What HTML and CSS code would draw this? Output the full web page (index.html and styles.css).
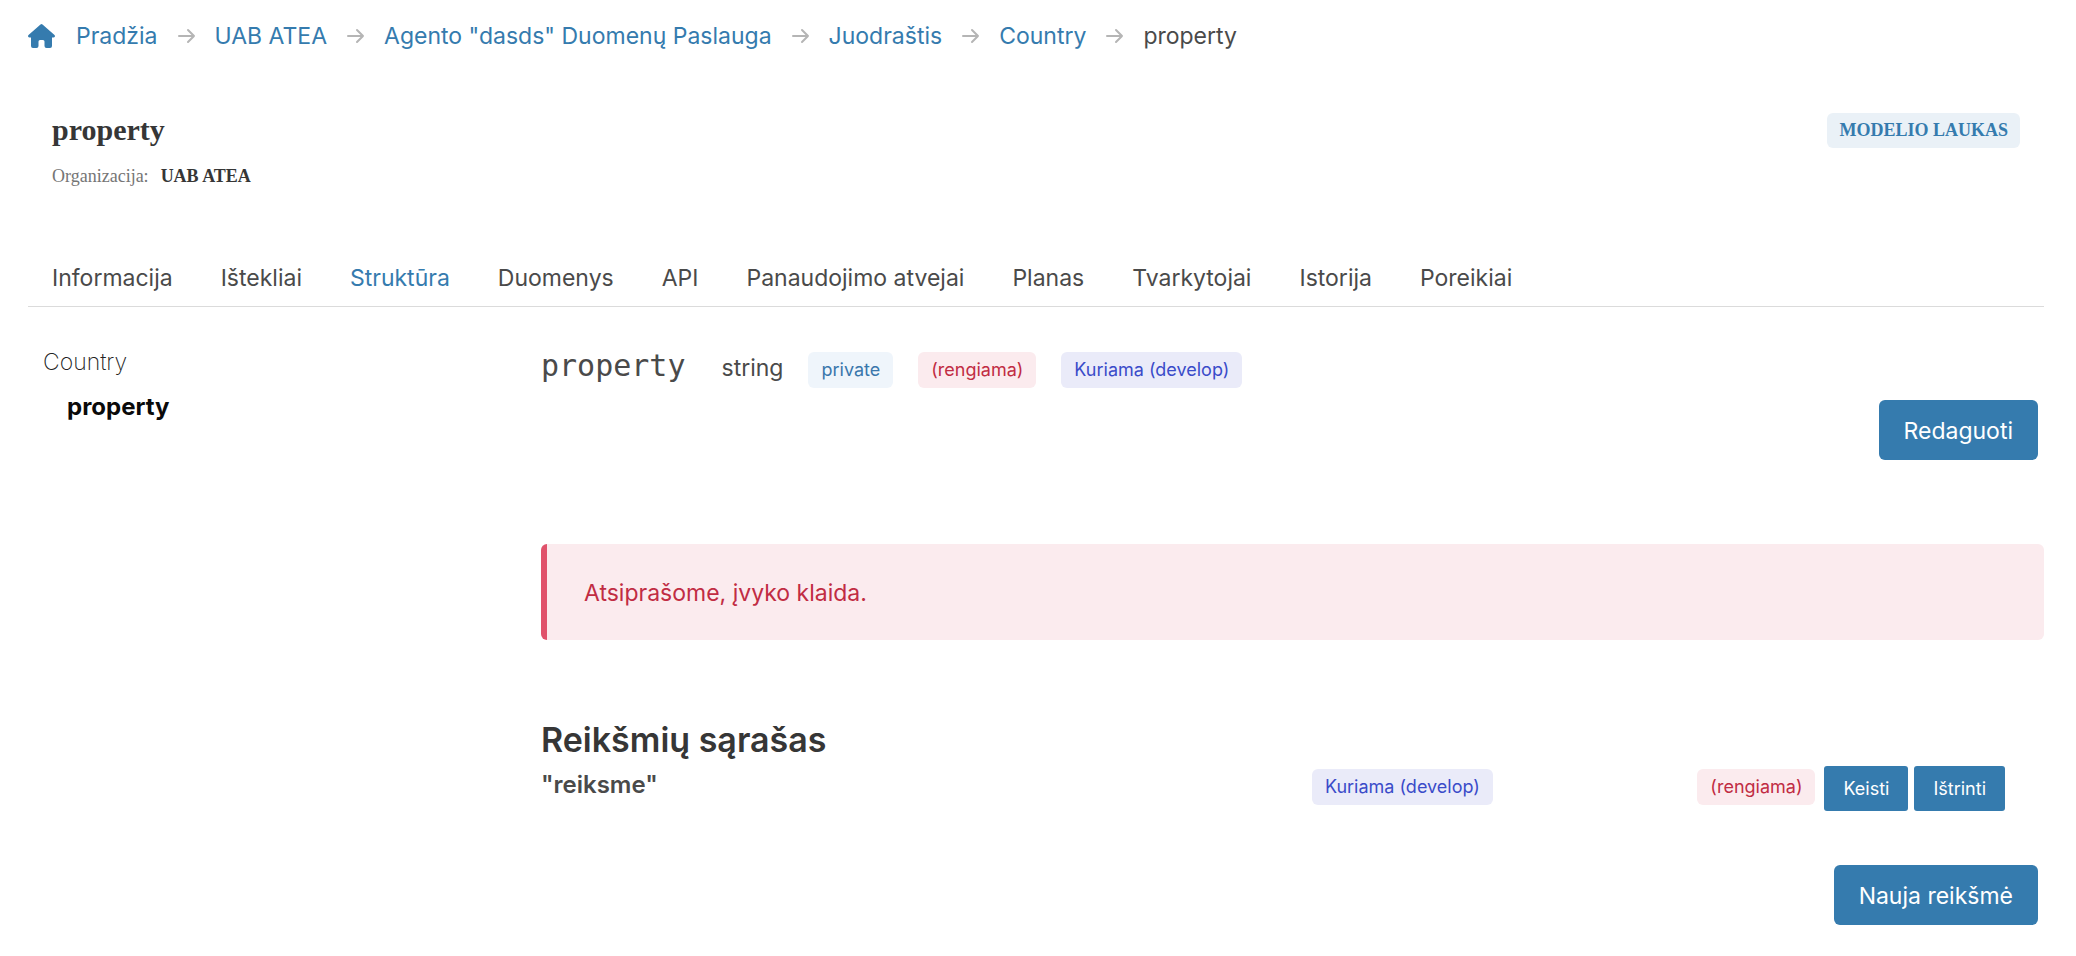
FILE: index.html
```html
<!DOCTYPE html>
<html lang="lt">
<head>
<meta charset="utf-8">
<meta name="viewport" content="width=device-width, initial-scale=1">
<title>property</title>
<link rel="stylesheet" href="styles.css">
</head>
<body>
<nav class="breadcrumb" aria-label="Kelias">
  <svg class="home-icon" viewBox="0 0 27 24" aria-hidden="true"><path fill="currentColor" d="M12.500.4Q13.500-.3 14.500.4L26.500 11Q27.200 12 26.800 12.800Q26.400 13.500 25.500 13.500H24V22Q24 24 22 24H18.500Q16.500 24 16.500 22V17.500Q16.500 16 15 16H12Q10.500 16 10.500 17.500V22Q10.500 24 8.500 24H5Q3 24 3 22V13.500H1.500Q.6 13.500.2 12.800Q-.2 12 .5 11Z"/></svg>
  <ol class="breadcrumb-list">
    <li><a href="#">Pradžia</a></li>
    <li><svg class="arrow" viewBox="0 0 18 16" aria-hidden="true"><path d="M1 8H16M10 2L16 8L10 14"/></svg><a href="#">UAB ATEA</a></li>
    <li><svg class="arrow" viewBox="0 0 18 16" aria-hidden="true"><path d="M1 8H16M10 2L16 8L10 14"/></svg><a href="#">Agento "dasds" Duomenų Paslauga</a></li>
    <li><svg class="arrow" viewBox="0 0 18 16" aria-hidden="true"><path d="M1 8H16M10 2L16 8L10 14"/></svg><a href="#">Juodraštis</a></li>
    <li><svg class="arrow" viewBox="0 0 18 16" aria-hidden="true"><path d="M1 8H16M10 2L16 8L10 14"/></svg><a href="#">Country</a></li>
    <li aria-current="page"><svg class="arrow" viewBox="0 0 18 16" aria-hidden="true"><path d="M1 8H16M10 2L16 8L10 14"/></svg>property</li>
  </ol>
</nav>
<header class="page-header">
  <div>
    <h1 class="page-title">property</h1>
    <p class="organization"><span>Organizacija:</span><strong>UAB ATEA</strong></p>
  </div>
  <span class="kind">MODELIO LAUKAS</span>
</header>
<nav class="tabs" aria-label="Skiltys">
  <a href="#">Informacija</a>
  <a href="#">Ištekliai</a>
  <a href="#" class="active">Struktūra</a>
  <a href="#">Duomenys</a>
  <a href="#">API</a>
  <a href="#">Panaudojimo atvejai</a>
  <a href="#">Planas</a>
  <a href="#">Tvarkytojai</a>
  <a href="#">Istorija</a>
  <a href="#">Poreikiai</a>
</nav>
<div class="columns">
  <aside class="tree">
    <a href="#">Country</a>
    <a href="#" class="current">property</a>
  </aside>
  <main>
    <div class="property">
      <span class="property-name">property</span>
      <span class="property-type">string</span>
      <span class="tag tag-info">private</span>
      <span class="tag tag-danger">(rengiama)</span>
      <span class="tag tag-link">Kuriama (develop)</span>
    </div>
    <div class="actions"><button type="button" class="button">Redaguoti</button></div>
    <div class="alert" role="alert">Atsiprašome, įvyko klaida.</div>
    <h2 class="section-title">Reikšmių sąrašas</h2>
    <div class="value-row">
      <strong class="value">"reiksme"</strong>
      <div class="value-state"><span class="tag tag-link">Kuriama (develop)</span></div>
      <div class="value-actions">
        <div class="value-state"><span class="tag tag-danger">(rengiama)</span></div>
        <div class="value-buttons">
          <button type="button" class="button button-small">Keisti</button>
          <button type="button" class="button button-small">Ištrinti</button>
        </div>
      </div>
    </div>
    <div class="actions"><button type="button" class="button">Nauja reikšmė</button></div>
  </main>
</div>
</body>
</html>
```
FILE: styles.css
```css
* { box-sizing: border-box; }
body {
  margin: 0;
  padding: 18px 32px 0 28px;
  background: #fff;
  color: #4a4a4a;
  font: 23px/36px Inter, "Liberation Sans", sans-serif;
}
a { color: inherit; text-decoration: none; }
.breadcrumb { display: flex; align-items: center; gap: 21px; color: #357bae; }
.home-icon { width: 27px; height: 24px; }
.breadcrumb-list { display: flex; margin: 0; padding: 0; list-style: none; }
.breadcrumb-list li { display: flex; align-items: center; }
.breadcrumb-list [aria-current] { color: #4a4a4a; }
.arrow {
  width: 18px;
  height: 16px;
  margin: 0 19px 0 20px;
  fill: none;
  stroke: #b5b5b5;
  stroke-width: 2;
  stroke-linecap: round;
  stroke-linejoin: round;
}
.page-header {
  display: flex;
  align-items: flex-start;
  justify-content: space-between;
  padding: 59px 24px 0;
  font-family: "Liberation Serif", serif;
}
.page-title { margin: 0; color: #363636; font-size: 30px; line-height: 34px; }
.organization {
  display: flex;
  gap: 12px;
  margin: 15px 0 0;
  color: #757575;
  font-size: 18px;
  line-height: 28px;
}
.organization strong { color: #363636; }
.kind {
  padding: 0 12px;
  border-radius: 6px;
  background: #eaf1f7;
  color: #357bae;
  font-size: 18px;
  font-weight: 700;
  line-height: 35px;
}
.tabs {
  display: flex;
  gap: 48px;
  margin-top: 70px;
  padding: 0 24px 10px;
  border-bottom: 1px solid #dbdbdb;
}
.tabs .active { color: #357bae; }
.columns { display: grid; grid-template-columns: 1fr 3fr; gap: 12px; padding-top: 37px; }
.tree { display: flex; flex-direction: column; gap: 9px; padding-left: 15px; color: #222; }
.tree a { font-weight: 200; }
.tree .current { padding-left: 24px; color: #0a0a0a; font-size: 24px; font-weight: 700; }
.property { display: flex; align-items: baseline; gap: 25px; min-height: 56px; padding-top: 5px; }
.property-name { margin-right: 11px; font: 30px/34px "DejaVu Sans Mono", monospace; }
.tag {
  display: inline-block;
  padding: 0 13px;
  border-radius: 6px;
  font-size: 18px;
  line-height: 36px;
  white-space: nowrap;
}
.tag-info { background: #eff5fb; color: #3a77ac; }
.tag-danger { background: #fbebee; color: #c12c43; }
.tag-link { background: #eaebf9; color: #3a4bc9; }
.actions { display: flex; justify-content: flex-end; padding-right: 6px; }
.button {
  height: 60px;
  padding: 1px 25px 0;
  border: 0;
  border-radius: 6px;
  background: #357bae;
  color: #fff;
  font: inherit;
  cursor: pointer;
}
.button-small { height: 45px; padding: 0 19px; border-radius: 3px; font-size: 18px; }
.alert {
  margin-top: 84px;
  padding: 31px 37px 29px;
  border-left: 6px solid #e0526b;
  border-radius: 6px;
  background: #fbebee;
  color: #c12c43;
}
.section-title { margin: 79px 0 0; color: #363636; font-size: 34px; font-weight: 600; line-height: 42px; }
.value-row {
  display: grid;
  grid-template-columns: 2fr 1fr auto;
  align-items: start;
  margin-top: 5px;
  padding-right: 39px;
}
.value { font-size: 24px; font-weight: 600; line-height: 38px; }
.value-state { display: flex; padding-top: 3px; }
.value-actions { display: flex; align-items: flex-start; gap: 9px; }
.value-buttons { display: flex; gap: 6px; }
.value-row + .actions { margin-top: 54px; }
```
